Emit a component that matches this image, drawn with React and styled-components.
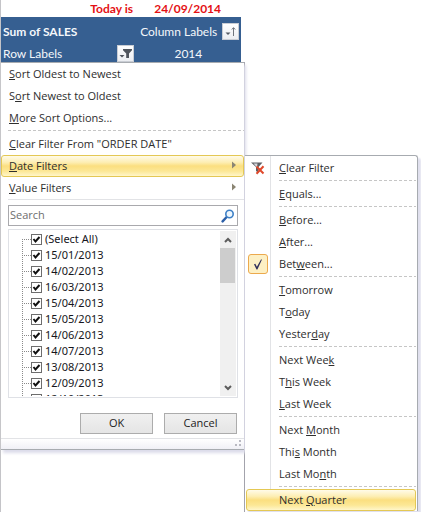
import React from "react";
import styled, { createGlobalStyle, css } from "styled-components";

const Global = createGlobalStyle`
  * { box-sizing: border-box; }
  body {
    margin: 0;
    background: #fff;
    overflow: hidden;
    font-family: "Open Sans", "Noto Sans", sans-serif;
    font-size: 11px;
    color: #2e2e2e;
  }
  button, input { font: inherit; color: inherit; margin: 0; }
`;

const Page = styled.main`
  min-height: 100vh;
  display: flex;
  flex-direction: column;
`;

const Sheet = styled.table`
  width: 57.3%;
  border-collapse: collapse;
  table-layout: fixed;
  font-family: Lato, sans-serif;
  font-size: 12px;
  border-left: 1px solid #c4c4c8;

  td, th {
    padding: 0;
    font-weight: 400;
  }
`;

const DateRow = styled.tr`
  height: 17px;
  line-height: 17px;
  color: #e41014;

  td { font-weight: 700; }
  td:first-child { text-align: right; padding-right: 2px; }
  td:last-child { text-align: center; }
`;

const PivotRow = styled.tr`
  height: ${(p) => p.$height}px;
  background: #365f91;
  color: #f4f7fb;
`;

const Cell = styled.div`
  display: flex;
  align-items: center;
  justify-content: ${(p) => p.$justify || "space-between"};
  gap: 5px;
  height: 22px;
  padding: 5px 1px 0 2px;
  white-space: nowrap;
  font-weight: ${(p) => (p.$bold ? 700 : 400)};
`;

const FilterButton = styled.button`
  display: grid;
  place-items: center;
  width: 17px;
  height: 17px;
  padding: 0;
  border: 1px solid #c9cdd4;
  background: linear-gradient(#fff, #eceef2);
`;

const Menus = styled.div`
  flex: 1;
  display: flex;
  align-items: flex-start;
  padding-right: 3px;
`;

const MainColumn = styled.section`
  flex: 246 1 0;
  align-self: stretch;
  min-width: 0;
  border-left: 1px solid #c4c4c8;
  border-right: 1px solid #a3a3ac;
`;

const MenuPanel = styled.div`
  background: #fff;
  border-top: 1px solid #a7abb0;
  border-bottom: 1px solid #a7abb0;
  box-shadow: 2px 3px 3px #dcdcea;
`;

const SubMenu = styled.div`
  flex: 172 1 0;
  min-width: 0;
  margin: 93px 0 0;
  padding: 1px 1px 0;
  border: 1px solid #a7abb0;
  border-bottom: 0;
  border-left: 0;
  border-radius: 0 3px 0 0;
  background: linear-gradient(90deg, #fff 25px, #e2e3e6 25px, #e2e3e6 26px, #fff 26px);
  box-shadow: 3px 3px 2px #e0e0ee;
`;

const highlight = css`
  border-color: #e4c854;
  background: linear-gradient(#fffbe9, #fdeeb3 32%, #fbdf80 50%, #fce795 75%, #fff6c9);
`;

const Item = styled.button`
  display: flex;
  align-items: center;
  width: 100%;
  height: 22px;
  padding: 0 7px 2px;
  border: 1px solid transparent;
  border-radius: 3px;
  background: transparent;
  text-align: left;
  white-space: nowrap;
  ${(p) => p.$active && highlight}

  svg { margin-left: auto; }
`;

const SubItem = styled(Item)`
  padding: 0;

  svg { margin: 0; }
  > span:last-child { padding-bottom: 2px; }
`;

const IconSlot = styled.span`
  display: grid;
  place-items: center;
  flex: none;
  width: 20px;
  height: 20px;
  margin: 0 11px 0 1px;
  border: 1px solid ${(p) => (p.$checked ? "#eca94d" : "transparent")};
  border-radius: 3px;
  background: ${(p) => (p.$checked ? "#fdf0c4" : "transparent")};
`;

const Separator = styled.hr`
  height: 1px;
  margin: ${(p) => (p.$sub ? "1px 0 2px 33px" : "1px 0 2px 7px")};
  border: 0;
  background: repeating-linear-gradient(90deg, #c6c6c6 0 3px, transparent 3px 5px);
`;

const FilterArea = styled.form`
  margin-left: 7px;
  padding: 5px 6px 4px 0;
  border-top: 1px solid #e2e3e6;
`;

const SearchBox = styled.label`
  display: flex;
  align-items: center;
  height: 21px;
  padding: 0 2px 0 1px;
  border: 1px solid #a9a9ad;
  background: #fff;

  input {
    flex: 1;
    min-width: 0;
    padding: 0 0 2px;
    border: 0;
    outline: 0;
    background: transparent;
  }
  input::placeholder { color: #6e6e6e; opacity: 1; }
`;

const ListBox = styled.div`
  display: flex;
  height: 169px;
  margin-top: 3px;
  padding: 1px;
  border: 1px solid #dfe1e6;
`;

const Tree = styled.ul`
  flex: 1;
  margin: 0;
  padding: 0 0 0 12px;
  overflow-y: auto;
  scrollbar-width: none;
  list-style: none;
  font-family: "Noto Sans", sans-serif;
  color: #16161c;
`;

const Branch = styled.li`
  display: flex;
  align-items: center;
  height: 16px;
  background:
    repeating-linear-gradient(90deg, #8a8a8a 0 1px, transparent 1px 2px) 0 8px / 9px 1px no-repeat,
    repeating-linear-gradient(#8a8a8a 0 1px, transparent 1px 2px) 0 ${(p) => (p.$first ? 8 : 0)}px / 1px 16px no-repeat;

  label {
    display: flex;
    align-items: center;
    gap: 3px;
    margin-left: 9px;
    line-height: 16px;
  }
`;

const Tick = styled.input`
  appearance: none;
  width: 11px;
  height: 11px;
  border: 1px solid #6d6d6d;
  background: #fff;
`;

const TickBox = styled.span`
  display: grid;
  width: 11px;
  height: 11px;

  > * { grid-area: 1 / 1; }
  svg { pointer-events: none; visibility: hidden; }
  input:checked + svg { visibility: visible; }
`;

const ScrollTrack = styled.div`
  display: flex;
  flex-direction: column;
  width: 16px;
  background: #f0f0f0;
`;

const ScrollButton = styled.button`
  display: grid;
  place-items: center;
  height: 17px;
  padding: 0;
  border: 0;
  background: transparent;
`;

const ScrollThumb = styled.div`
  height: 35px;
  margin: 0 1px auto 0;
  background: #cdcdcd;
`;

const Actions = styled.div`
  display: flex;
  justify-content: flex-end;
  gap: 11px;
  margin: 15px 1px 0 0;
`;

const ActionButton = styled.button`
  width: 73px;
  height: 21px;
  padding: 0 0 2px;
  border: 1px solid #acacac;
  background: linear-gradient(#f0f0f0, #e5e5e5);
  color: #1c1c1c;
`;

const Footer = styled.div`
  display: flex;
  justify-content: flex-end;
  align-items: flex-end;
  height: 11px;
  padding: 0 2px 2px;
  border-top: 1px solid #e2e3e6;
  background: linear-gradient(#fff, #f0f0f6);
`;

/* Wraps the access-key letter of a menu caption, marked by "&", in <u>. */
const Key = ({ children }) => {
  const i = children.indexOf("&");
  return (
    <span>
      {children.slice(0, i)}
      <u>{children[i + 1]}</u>
      {children.slice(i + 2)}
    </span>
  );
};

const Arrow = () => (
  <svg width="4" height="8" viewBox="0 0 4 8" aria-hidden="true">
    <path d="M0 0.5L4 4L0 7.5Z" fill="#8b8573" />
  </svg>
);

const SortIcon = () => (
  <svg width="15" height="15" viewBox="0 0 15 15" aria-hidden="true">
    <path d="M2.5 8.5h5L5 11Z" fill="#555a63" />
    <path d="M10.5 12V4M8.8 5.5L10.5 3.6L12.2 5.5" fill="none" stroke="#70757d" />
  </svg>
);

const FunnelIcon = () => (
  <svg width="15" height="15" viewBox="0 0 15 15" aria-hidden="true">
    <path d="M5 3h9v1.2L11 7.5V12H8.2V7.5L5 4.2Z" fill="#50555d" />
    <path d="M1.5 9h5L4 11.5Z" fill="#50555d" />
  </svg>
);

const ClearFilterIcon = () => (
  <svg width="16" height="16" viewBox="0 0 16 16" aria-hidden="true">
    <path d="M1 2.5h11.5L8.5 7v6L6 11V7Z" fill="#5d5f64" />
    <path d="M3.5 3.5h4L7 7.5Z" fill="#d6d8dc" />
    <path d="M6.5 6.5L13.5 13.5M13.5 6.2L6.5 13.8" fill="none" stroke="#e0492b" strokeWidth="2" />
  </svg>
);

const CheckIcon = () => (
  <svg width="12" height="13" viewBox="0 0 12 13" aria-hidden="true">
    <path d="M2 6.2L3.3 5.7L4.9 8.8L9 1.4L10 1.4L5.4 11.6L4.5 11.6Z" fill="#30305c" />
  </svg>
);

const SearchIcon = () => (
  <svg width="14" height="14" viewBox="0 0 14 14" aria-hidden="true">
    <path d="M1.6 12.4L5.4 8.3" stroke="#2c5fa8" strokeWidth="2.4" strokeLinecap="round" />
    <circle cx="8.5" cy="5" r="3.7" fill="#edf6fd" stroke="#3c7fc6" strokeWidth="1.6" />
  </svg>
);

const Chevron = ({ down }) => (
  <svg width="8" height="6" viewBox="0 0 8 6" aria-hidden="true">
    <path d={down ? "M1 1L4 4L7 1" : "M1 5L4 2L7 5"} fill="none" stroke="#5c5c5c" strokeWidth="2" />
  </svg>
);

const Grip = () => (
  <svg width="7" height="7" viewBox="0 0 7 7" aria-hidden="true">
    <path d="M4 0h2v2h-2zM0 4h2v2h-2zM4 4h2v2h-2z" fill="#b9b9c2" />
  </svg>
);

const dates = [
  "(Select All)", "15/01/2013", "14/02/2013", "16/03/2013", "15/04/2013", "15/05/2013",
  "14/06/2013", "14/07/2013", "13/08/2013", "12/09/2013", "12/10/2013",
];

const groups = [
  ["&Clear Filter"],
  ["&Equals..."],
  ["&Before...", "&After...", "Bet&ween..."],
  ["&Tomorrow", "T&oday", "Yester&day"],
  ["Next Wee&k", "T&his Week", "&Last Week"],
  ["Next &Month", "Thi&s Month", "Last Mo&nth"],
  ["Next &Quarter"],
];

const subIcon = (caption) => {
  if (caption === "&Clear Filter") return <ClearFilterIcon />;
  if (caption === "Bet&ween...") return <CheckIcon />;
  return null;
};

export default function App() {
  return (
    <>
      <Global />
      <Page>
        <Sheet>
          <colgroup>
            <col width="56%" />
            <col width="44%" />
          </colgroup>
          <tbody>
            <DateRow>
              <td>Today is</td>
              <td>24/09/2014</td>
            </DateRow>
            <PivotRow $height={23}>
              <th scope="row"><Cell $bold>Sum of SALES</Cell></th>
              <th scope="col">
                <Cell $justify="flex-end">
                  Column Labels
                  <FilterButton type="button" aria-label="Sort columns"><SortIcon /></FilterButton>
                </Cell>
              </th>
            </PivotRow>
            <PivotRow $height={22}>
              <th scope="row">
                <Cell>
                  Row Labels
                  <FilterButton type="button" aria-label="Filter rows"><FunnelIcon /></FilterButton>
                </Cell>
              </th>
              <td><Cell $justify="center">2014</Cell></td>
            </PivotRow>
          </tbody>
        </Sheet>

        <Menus>
          <MainColumn>
            <MenuPanel>
              <Item type="button"><Key>&Sort Oldest to Newest</Key></Item>
              <Item type="button"><Key>S&ort Newest to Oldest</Key></Item>
              <Item type="button"><Key>&More Sort Options...</Key></Item>
              <Separator />
              <Item type="button"><Key>{'&Clear Filter From "ORDER DATE"'}</Key></Item>
              <Item type="button" $active><Key>&Date Filters</Key><Arrow /></Item>
              <Item type="button"><Key>&Value Filters</Key><Arrow /></Item>
              <FilterArea>
                <SearchBox>
                  <input type="text" placeholder="Search" aria-label="Search" />
                  <SearchIcon />
                </SearchBox>
                <ListBox>
                  <Tree>
                    {dates.map((date, i) => (
                      <Branch key={date} $first={i === 0}>
                        <label>
                          <TickBox>
                            <Tick type="checkbox" defaultChecked />
                            <svg width="11" height="11" viewBox="0 0 11 11" aria-hidden="true">
                              <path d="M2.5 5L4.5 7.5L8.5 3" fill="none" stroke="#111" strokeWidth="2" />
                            </svg>
                          </TickBox>
                          {date}
                        </label>
                      </Branch>
                    ))}
                  </Tree>
                  <ScrollTrack>
                    <ScrollButton type="button" aria-label="Scroll up"><Chevron /></ScrollButton>
                    <ScrollThumb />
                    <ScrollButton type="button" aria-label="Scroll down"><Chevron down /></ScrollButton>
                  </ScrollTrack>
                </ListBox>
                <Actions>
                  <ActionButton type="button">OK</ActionButton>
                  <ActionButton type="button">Cancel</ActionButton>
                </Actions>
              </FilterArea>
              <Footer><Grip /></Footer>
            </MenuPanel>
          </MainColumn>

          <SubMenu>
            {groups.map((group, g) => (
              <React.Fragment key={group[0]}>
                {g > 0 && <Separator $sub />}
                {group.map((caption) => (
                  <SubItem key={caption} type="button" $active={caption === "Next &Quarter"}>
                    <IconSlot $checked={caption === "Bet&ween..."}>{subIcon(caption)}</IconSlot>
                    <Key>{caption}</Key>
                  </SubItem>
                ))}
              </React.Fragment>
            ))}
          </SubMenu>
        </Menus>
      </Page>
    </>
  );
}
